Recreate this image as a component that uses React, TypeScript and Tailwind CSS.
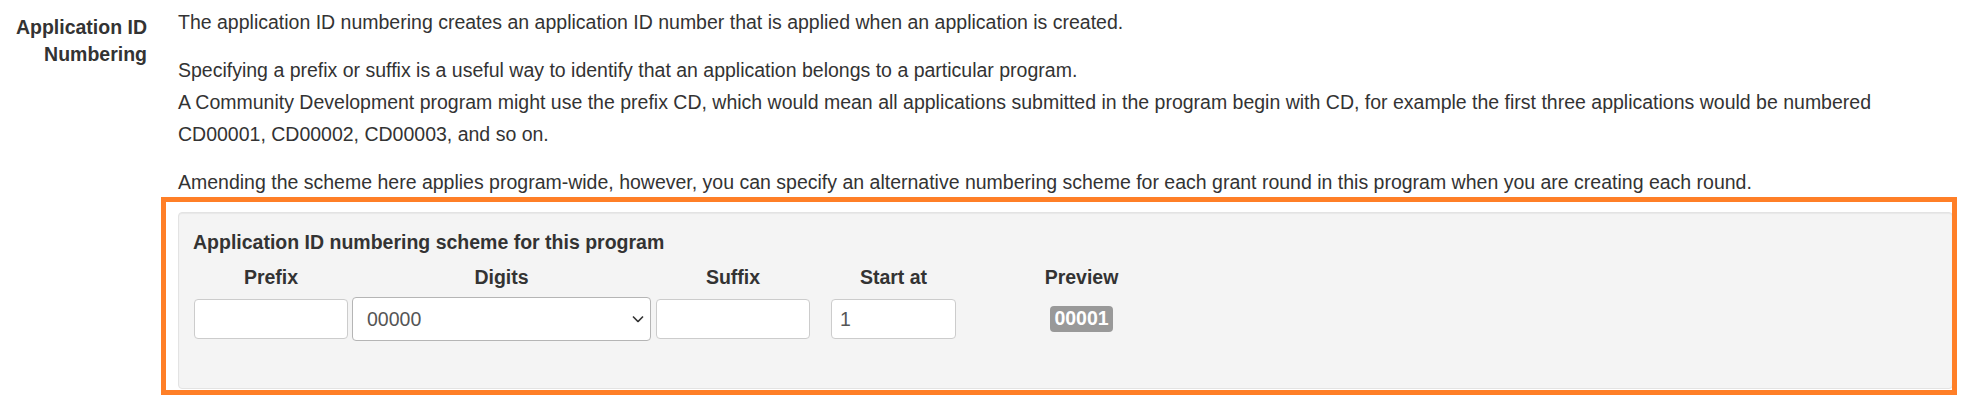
import { ChangeEvent, useState } from "react";

function Chevron() {
  return (
    <svg
      className="pointer-events-none absolute right-[7px] top-1/2 -translate-y-1/2"
      width="12"
      height="7"
      viewBox="0 0 12 7"
      fill="none"
    >
      <polyline points="1,1 6,6 11,1" stroke="#333" strokeWidth="1.6" />
    </svg>
  );
}

function Column({ label, width, children }: { label: string; width: string; children: React.ReactNode }) {
  return (
    <div className={`flex flex-col ${width}`}>
      <div className="text-center font-bold leading-[28px]">{label}</div>
      <div className="mt-[6px] flex h-[44px] items-center justify-center">{children}</div>
    </div>
  );
}

export default function App() {
  const [prefix, setPrefix] = useState("");
  const [digits, setDigits] = useState("5");
  const [suffix, setSuffix] = useState("");
  const [start, setStart] = useState("1");

  const n = parseInt(start, 10) || 0;
  const preview = prefix + String(n).padStart(parseInt(digits, 10), "0") + suffix;

  const inputClass =
    "h-[40px] w-full rounded-[4px] border border-[#ccc] bg-white px-[8px] text-[19.5px] text-[#555] outline-none";

  return (
    <div className="relative min-h-[401px] bg-white font-['Liberation_Sans',Arial,sans-serif] text-[19.5px] text-[#333]">
      <div className="flex pt-[6px] pr-[10px]">
        <div className="w-[147px] shrink-0 pt-[7.5px] text-right font-bold leading-[27px]">
          Application ID
          <br />
          Numbering
        </div>

        <div className="ml-[31px] flex-1 leading-[32px]">
          <p className="mb-[16px]">
            The application ID numbering creates an application ID number that is applied when an application is created.
          </p>
          <p className="mb-[16px]">
            Specifying a prefix or suffix is a useful way to identify that an application belongs to a particular program.
            <br />
            A Community Development program might use the prefix CD, which would mean all applications submitted in the
            program begin with CD, for example the first three applications would be numbered CD00001, CD00002, CD00003,
            and so on.
          </p>
          <p className="mb-[14px]">
            Amending the scheme here applies program-wide, however, you can specify an alternative numbering scheme for
            each grant round in this program when you are creating each round.
          </p>

          <div className="rounded-[4px] border border-[#e3e3e3] bg-[#f4f4f4] pb-[47px] pl-[14px] pt-[15px] shadow-[inset_0_1px_1px_rgba(0,0,0,0.05)]">
            <div className="font-bold leading-[28px]">Application ID numbering scheme for this program</div>

            <div className="mt-[7px] flex pl-[1px]">
              <Column label="Prefix" width="w-[154px]">
                <input
                  className={inputClass}
                  value={prefix}
                  onChange={(e: ChangeEvent<HTMLInputElement>) => setPrefix(e.target.value)}
                />
              </Column>

              <div className="ml-[4px]">
                <Column label="Digits" width="w-[299px]">
                  <div className="relative w-full">
                    <select
                      className="h-[44px] w-full appearance-none rounded-[4px] border border-[#b5b5b5] bg-white pl-[14px] text-[19.5px] text-[#555] outline-none"
                      value={digits}
                      onChange={(e: ChangeEvent<HTMLSelectElement>) => setDigits(e.target.value)}
                    >
                      <option value="3">000</option>
                      <option value="4">0000</option>
                      <option value="5">00000</option>
                      <option value="6">000000</option>
                    </select>
                    <Chevron />
                  </div>
                </Column>
              </div>

              <div className="ml-[5px]">
                <Column label="Suffix" width="w-[154px]">
                  <input
                    className={inputClass}
                    value={suffix}
                    onChange={(e: ChangeEvent<HTMLInputElement>) => setSuffix(e.target.value)}
                  />
                </Column>
              </div>

              <div className="ml-[21px]">
                <Column label="Start at" width="w-[125px]">
                  <input
                    className={inputClass}
                    value={start}
                    onChange={(e: ChangeEvent<HTMLInputElement>) => setStart(e.target.value)}
                  />
                </Column>
              </div>

              <div className="ml-[63px]">
                <Column label="Preview" width="w-[125px]">
                  <span className="rounded-[4px] bg-[#999] px-[4px] pb-[3px] pt-[3px] font-bold leading-none text-white">
                    {preview}
                  </span>
                </Column>
              </div>
            </div>
          </div>
        </div>
      </div>

      {/* highlight box drawn over the scheme panel */}
      <div className="pointer-events-none absolute left-[161px] top-[197px] h-[198px] w-[1796px] border-[5px] border-[#ff7f27]" />
    </div>
  );
}
